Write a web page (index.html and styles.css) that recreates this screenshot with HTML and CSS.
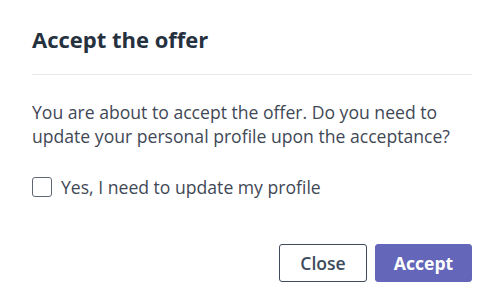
FILE: index.html
```html
<!DOCTYPE html>
<html lang="en">
<head>
<meta charset="utf-8">
<title>Accept the offer</title>
<link rel="stylesheet" href="styles.css">
</head>
<body>
<div class="dialog">
  <div class="dialog-header">
    <h2 class="dialog-title">Accept the offer</h2>
  </div>
  <div class="dialog-body">
    <p class="dialog-text">You are about to accept the offer. Do you need to update your personal profile upon the acceptance?</p>
    <label class="check-row">
      <span class="checkbox"></span>
      <span class="check-label">Yes, I need to update my profile</span>
    </label>
  </div>
  <div class="dialog-footer">
    <button class="btn btn-outline">Close</button>
    <button class="btn btn-primary">Accept</button>
  </div>
</div>
</body>
</html>
```
FILE: styles.css
```css
* { box-sizing: border-box; }
html, body { margin: 0; padding: 0; background: #ffffff; }
body {
  font-family: "Open Sans", "Liberation Sans", sans-serif;
  color: #3f4856;
}
.dialog {
  width: 500px;
  padding: 24px 28px 0 32px;
}
.dialog-header {
  padding-bottom: 20px;
  border-bottom: 1px solid #e6e8eb;
}
.dialog-title {
  margin: 0;
  font-size: 22px;
  line-height: 30px;
  font-weight: 700;
  color: #263140;
}
.dialog-body {
  padding-top: 25px;
}
.dialog-text {
  margin: 0;
  font-size: 17.6px;
  line-height: 24px;
  color: #3f4856;
}
.check-row {
  display: flex;
  align-items: center;
  gap: 9px;
  margin-top: 27px;
  height: 24px;
}
.checkbox {
  width: 20px;
  height: 20px;
  border: 1px solid #5f6773;
  border-radius: 3px;
  background: #fff;
  flex: none;
}
.check-label {
  font-size: 17.6px;
  line-height: 24px;
  color: #3f4856;
}
.dialog-footer {
  display: flex;
  justify-content: flex-end;
  gap: 8px;
  margin-top: 45px;
}
.btn {
  font-family: "Open Sans", "Liberation Sans", sans-serif;
  font-size: 17.6px;
  line-height: 24px;
  height: 38px;
  padding: 6px 0;
  border-radius: 3px;
  cursor: pointer;
  text-align: center;
}
.btn-outline {
  background: #fff;
  border: 1px solid #3d4b5c;
  color: #3d4b5c;
  font-weight: 600;
  width: 88px;
}
.btn-primary {
  background: #6466b9;
  border: 1px solid #6466b9;
  color: #fff;
  font-weight: 700;
  width: 97px;
}
```
